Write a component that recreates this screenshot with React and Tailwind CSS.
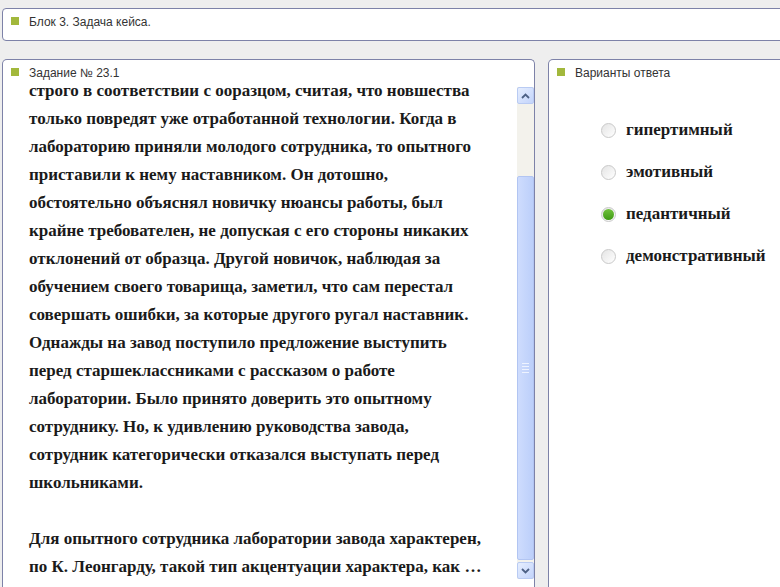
import { useState } from "react";

const lines = [
  "строго в соответствии с ооразцом, считая, что новшества",
  "только повредят уже отработанной технологии. Когда в",
  "лабораторию приняли молодого сотрудника, то опытного",
  "приставили к нему наставником. Он дотошно,",
  "обстоятельно объяснял новичку нюансы работы, был",
  "крайне требователен, не допуская с его стороны никаких",
  "отклонений от образца. Другой новичок, наблюдая за",
  "обучением своего товарища, заметил, что сам перестал",
  "совершать ошибки, за которые другого ругал наставник.",
  "Однажды на завод поступило предложение выступить",
  "перед старшеклассниками с рассказом о работе",
  "лаборатории. Было принято доверить это опытному",
  "сотруднику. Но, к удивлению руководства завода,",
  "сотрудник категорически отказался выступать перед",
  "школьниками.",
  "",
  "Для опытного сотрудника лаборатории завода характерен,",
  "по К. Леонгарду, такой тип акцентуации характера, как …",
];

const options = ["гипертимный", "эмотивный", "педантичный", "демонстративный"];

function PanelTitle({ children }) {
  return (
    <div className="flex items-start gap-[10px] pl-[8px] pt-[8px] h-[17px]">
      <span className="w-2 h-2 bg-[#a2b83c] shrink-0" />
      <span className="-mt-[1px] text-[12px] leading-[12px] text-[#333]">{children}</span>
    </div>
  );
}

function Chevron({ up }) {
  return (
    <svg width="9" height="6" viewBox="0 0 9 6">
      <path
        d={up ? "M1 5 L4.5 1.5 L8 5" : "M1 1 L4.5 4.5 L8 1"}
        fill="none"
        stroke="#4d6185"
        strokeWidth="1.8"
      />
    </svg>
  );
}

function ScrollButton({ up }) {
  return (
    <div className="h-[17px] w-[17px] rounded-[2px] border border-[#b9cbf3] bg-gradient-to-br from-[#e6eefe] to-[#c3d4fb] flex items-center justify-center">
      <Chevron up={up} />
    </div>
  );
}

function Scrollbar() {
  return (
    <div className="mt-[10px] w-[17px] h-[492px] shrink-0 flex flex-col bg-[#f3f2ec]">
      <ScrollButton up />
      <div className="flex-1 flex flex-col pb-[2px]">
        <div className="h-[72px]" />
        <div className="flex-1 rounded-[2px] border border-[#b2c5f2] bg-gradient-to-r from-[#cedcfd] to-[#bccffa] flex flex-col items-center justify-center gap-[2px]">
          <span className="w-[7px] h-px bg-[#eef3ff]" />
          <span className="w-[7px] h-px bg-[#eef3ff]" />
          <span className="w-[7px] h-px bg-[#eef3ff]" />
          <span className="w-[7px] h-px bg-[#eef3ff]" />
        </div>
      </div>
      <ScrollButton />
    </div>
  );
}

function Radio({ checked }) {
  return (
    <span className="w-[15px] h-[15px] rounded-full border border-[#c9c9c9] bg-gradient-to-br from-[#e4e4e4] to-[#ffffff] flex items-center justify-center shrink-0">
      {checked && <span className="w-[11px] h-[11px] rounded-full bg-gradient-to-b from-[#6fc23a] to-[#3f9a12]" />}
    </span>
  );
}

export default function App() {
  const [picked, setPicked] = useState(2);
  const serif = { fontFamily: '"Liberation Serif", "Times New Roman", serif' };

  return (
    <div
      className="w-[780px] h-[587px] overflow-hidden bg-[#eeeeee]"
      style={{ fontFamily: '"Liberation Sans", Arial, sans-serif' }}
    >
      <div className="ml-[2px] mt-[8px] w-[800px] h-[33px] rounded-[4px] border border-[#7d82a8] bg-white">
        <div className="flex items-start gap-[10px] pl-[8px] pt-[8px]">
          <span className="w-2 h-2 bg-[#a2b83c] shrink-0" />
          <span className="-mt-[1px] text-[12px] leading-[12px] text-[#333]">Блок 3. Задача кейса.</span>
        </div>
      </div>

      <div className="flex gap-[13px] pl-[2px] mt-[18px]">
        <div className="w-[533px] h-[540px] shrink-0 rounded-t-[5px] border border-b-0 border-[#7d82a8] bg-white">
          <PanelTitle>Задание № 23.1</PanelTitle>
          <div className="flex">
            <div
              className="w-[514px] shrink-0 pl-[26px] text-[17px] leading-[28px] font-bold text-[#1a1a1a] whitespace-nowrap"
              style={serif}
            >
              {lines.map((l, i) => (
                <div key={i} className="h-[28px]">{l}</div>
              ))}
            </div>
            <Scrollbar />
          </div>
        </div>

        <div className="w-[240px] h-[540px] shrink-0 rounded-t-[5px] border border-b-0 border-[#7d82a8] bg-white">
          <div className="flex items-start gap-[10px] pl-[8px] pt-[8px] h-[19px]">
            <span className="w-2 h-2 bg-[#a2b83c] shrink-0" />
            <span className="-mt-[1px] text-[12px] leading-[12px] text-[#333]">Варианты ответа</span>
          </div>
          <div className="pl-[52px] pt-[37px] flex flex-col gap-[14px]">
            {options.map((o, i) => (
              <label
                key={o}
                onClick={() => setPicked(i)}
                className="h-[28px] flex items-center gap-[10px] cursor-pointer whitespace-nowrap"
              >
                <Radio checked={picked === i} />
                <span className="text-[17px] font-bold text-[#1a1a1a]" style={serif}>{o}</span>
              </label>
            ))}
          </div>
        </div>
      </div>
    </div>
  );
}
